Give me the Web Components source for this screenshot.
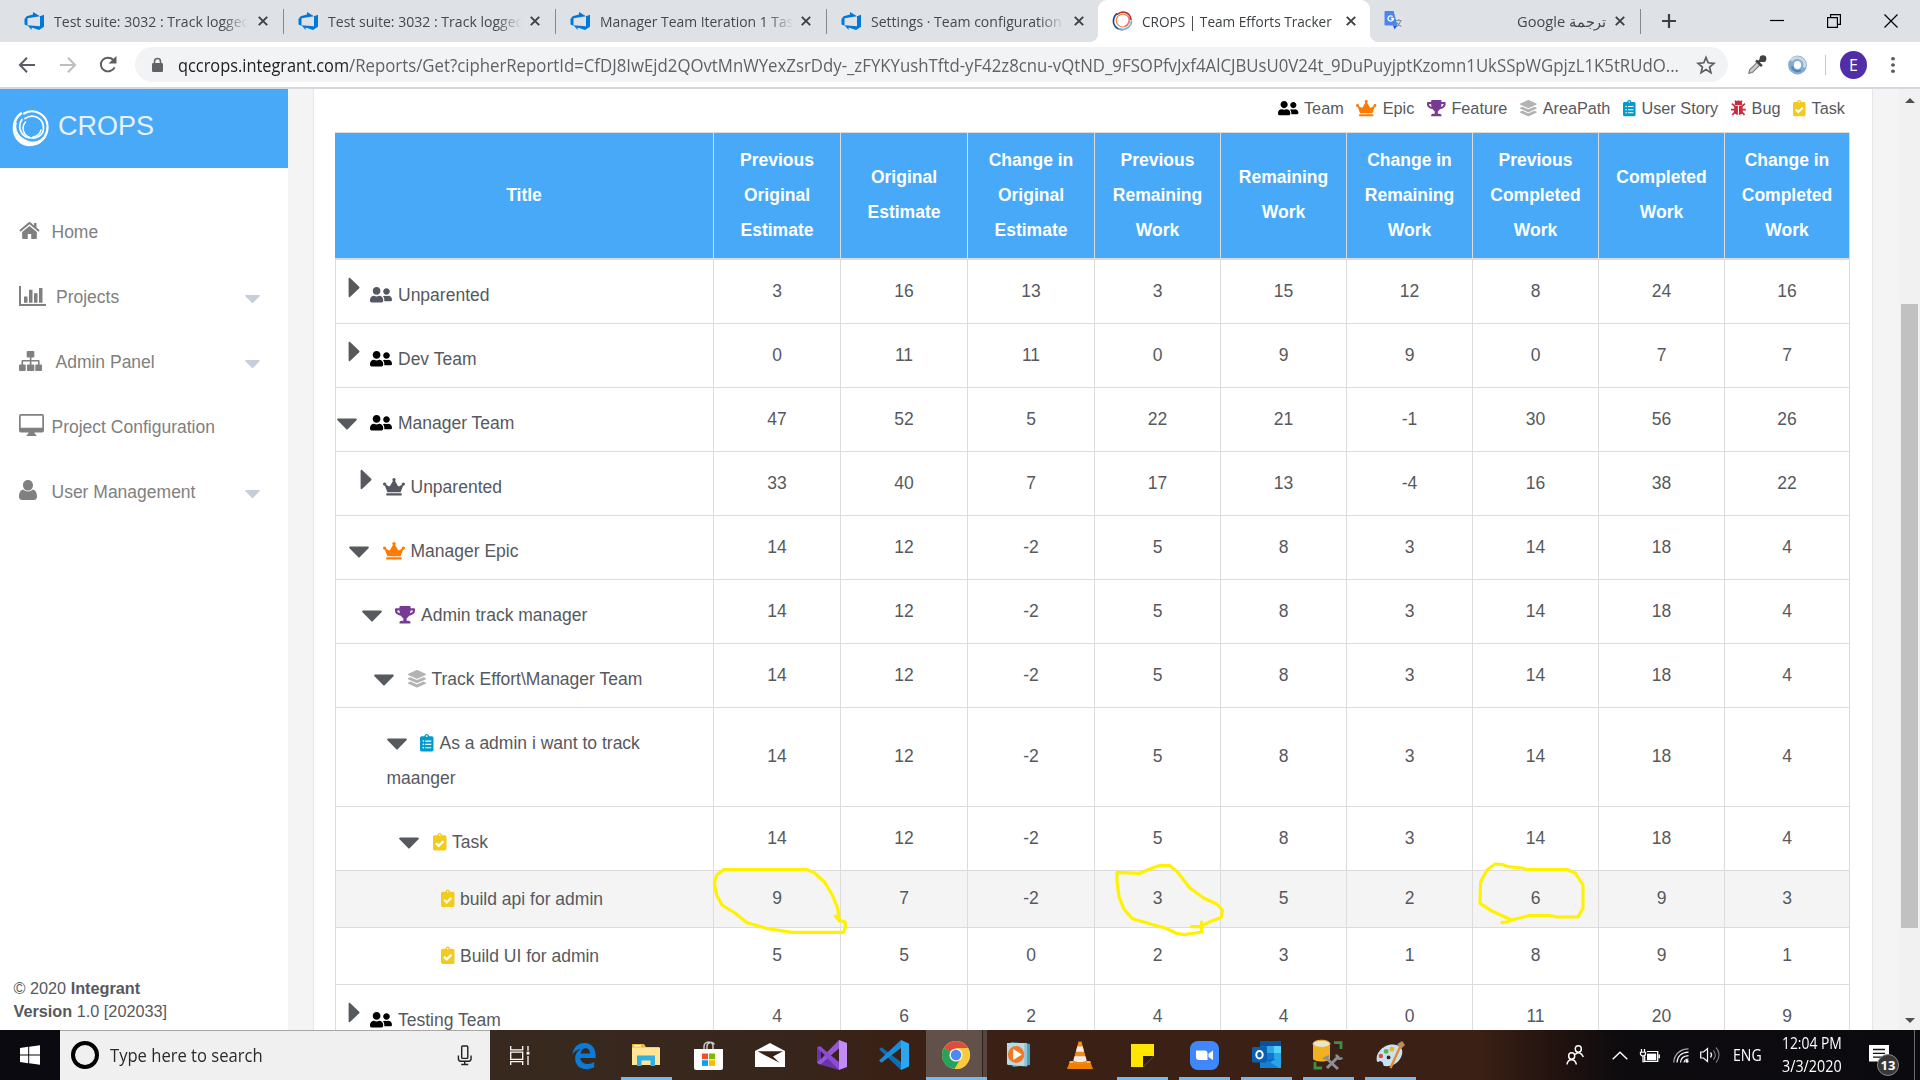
<!DOCTYPE html>
<html lang="en">
<head>
<meta charset="utf-8">
<title>CROPS | Team Efforts Tracker</title>
<style>
html,body{margin:0;height:100%;overflow:hidden}
body{font-family:"Liberation Sans",Arial,sans-serif;font-size:17.5px;color:#56595e;background:#fff}
</style>
</head>
<body>
<desktop-screen></desktop-screen>
<script>
const AZ='<path fill="#0078d7" d="M20 4v12.6L15 20l-7.400-2.600v2.600L3.500 15 16 16V5.500zM16 5.600 9 1v2.700L2.600 5.600.500 8.300v6l3 1.300V7.600z"/>';
const OC='<path d="M192 256c61.9 0 112-50.100 112-112S253.900 32 192 32 80 82.100 80 144s50.100 112 112 112zm76.800 32h-8.300c-20.800 10-43.900 16-68.500 16s-47.600-6-68.500-16h-8.300C51.600 288 0 339.600 0 403.200V432c0 26.500 21.500 48 48 48h288c26.500 0 48-21.500 48-48v-28.800c0-63.600-51.600-115.200-115.200-115.200zM480 256c53 0 96-43 96-96s-43-96-96-96-96 43-96 96 43 96 96 96zm48 32h-3.800c-13.900 4.800-28.600 8-44.200 8s-30.300-3.200-44.200-8H432c-20.400 0-39.200 5.900-55.700 15.400 24.400 26.300 39.700 61.200 39.700 99.800v38.400c0 2.200-.5 4.300-.6 6.400H592c26.500 0 48-21.500 48-48 0-61.900-50.100-112-112-112z"/>';
const ICONS={
azure:['0 0 21 21',AZ],
crops:['0 0 21 21','<g fill="none" stroke-linecap="round"><path d="M10 19.500C3 19 .8 13 1.500 9c.3-2.500 1.500-4.500 3-6" stroke="#1f4a80" stroke-width="1.700"/><path d="M7 19c7 2 12-3 12.500-8" stroke="#7fb2e0" stroke-width="1.800"/><path d="M5.500 3.500C10-1 18 1 19 9" stroke="#b3272c" stroke-width="1.500"/><ellipse cx="10.800" cy="10" rx="6.500" ry="6.800" stroke="#ef8540" stroke-width="1.300"/><path d="M17 6c1 4 0 8-4 10" stroke="#e6737c" stroke-width="1.300"/></g>'],
gtrans:['0 0 20 20','<path fill="#e1e4e8" d="M8 5h10.500v13.500H11z"/><path stroke="#8b97a5" stroke-width="1.200" fill="none" d="M11 9.500h6M14 8v1.500M16 9.500c-.5 3-2 4.500-4 6M12.500 11.500c1 2 2 3 4 4"/><path fill="#4a86ee" d="M1.500 0h7.700l3.600 14.500H1.500a1 1 0 0 1-1-1V1a1 1 0 0 1 1-1z"/><path fill="#3358c4" d="m8.500 14.500h4.300L10 18.500z"/><path fill="none" stroke="#fff" stroke-width="1.300" d="M8.200 5.600A2.600 2.600 0 1 0 9 7.500H6.500"/>'],
x:['0 0 10 10','<path d="m.8.8 8.400 8.400M9.200.8.8 9.200" stroke="#3c4043" stroke-width="1.900" fill="none"/>'],
plus:['0 0 16 16','<path d="M8 1v14M1 8h14" stroke="#3c4043" stroke-width="2.200"/>'],
winmin:['0 0 14 14','<path d="M0 6.500h14" stroke="#000" stroke-width="1.200"/>'],
winmax:['0 0 14 14','<path d="M.6 3.600h9.800v9.800H.6zM3.600 3.600v-3h9.800v9.800h-3" fill="none" stroke="#000" stroke-width="1.200"/>'],
winx:['0 0 14 14','<path d="m.5.500 13 13m0-13-13 13" stroke="#000" stroke-width="1.200"/>'],
back:['0 0 16 16','<path d="M8 .8.900 8 8 15.200M1 8h15" fill="none" stroke="#5a5d61" stroke-width="2"/>'],
fwd:['0 0 16 16','<path d="M8 .8 15.100 8 8 15.200M15 8H0" fill="none" stroke="#bcbec1" stroke-width="2"/>'],
reload:['0 0 18 18','<path d="M15.600 12A7.200 7.200 0 1 1 14.200 4" fill="none" stroke="#5a5d61" stroke-width="2"/><path fill="#5a5d61" d="M17.500 0v8h-8z"/>'],
lock:['0 0 11 14','<path fill="#5f6368" d="M1.300 5h8.400A1.300 1.300 0 0 1 11 6.300v6.400A1.300 1.300 0 0 1 9.700 14H1.300A1.300 1.300 0 0 1 0 12.700V6.300A1.300 1.300 0 0 1 1.300 5z"/><path fill="none" stroke="#5f6368" stroke-width="1.500" d="M2.500 6V3.500a3 3 0 0 1 6 0V6"/>'],
star:['0 0 20 20','<path fill="none" stroke="#5a5d61" stroke-width="1.700" stroke-linejoin="miter" d="m10 2.500 2.200 5.300 5.700.5-4.300 3.700 1.300 5.600-4.900-3-4.900 3 1.300-5.600L2.100 8.300l5.700-.5z"/>'],
pick:['0 0 20 20','<path d="m1.800 18.300.8-3.400 8.200-8.200 2.700 2.700-8.200 8.200z" fill="#c9cbce" stroke="#77797c" stroke-width="1.100"/><path d="M9 5.300 14.900 11.200M11 7.500 16.500 2.500" stroke="#3f4144" stroke-width="2.500"/><circle cx="16" cy="3.700" r="3.400" fill="#3f4144"/>'],
swirl:['0 0 21 21','<ellipse cx="10.500" cy="10.500" rx="6.500" ry="7" fill="none" stroke="#86abd1" stroke-width="5.800"/><path d="M4 6a7.500 7.500 0 0 1 8-3c5 1.500 7 6 5 10" fill="none" stroke="#c5d9ea" stroke-width="2.800"/><path d="M5 12c1 5 6 6 9 4" fill="none" stroke="#4f83b8" stroke-width="2"/>'],
dots:['0 0 6 20','<g fill="#5a5d61"><circle cx="3" cy="3" r="2"/><circle cx="3" cy="10" r="2"/><circle cx="3" cy="17" r="2"/></g>'],
logo:['0 0 37 39','<g fill="none" stroke="#fff" stroke-linecap="round"><path d="M8 4.500C-1 11-1 25 6 31.500c6 6 17 6 23.500-1" stroke-width="2.500"/><path d="M3 14c-3 10 4 21 14.500 22 6 .5 12-3 15-8-6 5-14 7-20 3C5 27.500 1.500 21 3 14z" fill="#fff" stroke-width="1"/><path d="M11 4.500C22-1.500 34 6 34.500 17c.3 8-4 14-11 17" stroke-width="2.200"/><path d="M16 29c-8-2-12-11-7-18.500M12 9.500C20 4 31 9 30.500 20c-.5 7-8 10.500-14 8.500" stroke-width="1.700"/><path d="M12.500 13C8 18 10 26 16.500 28.500M28 21c-1 4-4 6.500-8 7" stroke-width="1.500"/></g>'],
home:['0 0 22 18','<path d="M11 4.200 3.300 10.600V17a1 1 0 0 0 1 1h4.900v-5.300h3.600V18h4.900a1 1 0 0 0 1-1v-6.400z"/><path d="m.3 8.800 1.300 1.400L11 2.500l9.400 7.700 1.300-1.400-3.400-2.900V1h-2.600v2.700L11.900.3a1.500 1.500 0 0 0-1.800 0z"/>'],
bars:['0 0 27 21','<path d="M0 0h2v18.800h25V21H0zM5 11h3.500v6.500H5zM10 4h3.500v13.500H10zM15 7.500h3.500v10H15zM20 2h3.500v15.500H20z"/>'],
sitemap:['0 0 24 20','<path d="M9 0h6a1 1 0 0 1 1 1v4.500a1 1 0 0 1-1 1h-2V9h7.500a1 1 0 0 1 1 1v3.500H23a1 1 0 0 1 1 1V19a1 1 0 0 1-1 1h-5a1 1 0 0 1-1-1v-4.500a1 1 0 0 1 1-1h1.800v-3H13v3h2a1 1 0 0 1 1 1V19a1 1 0 0 1-1 1H9.300a1 1 0 0 1-1-1v-4.500a1 1 0 0 1 1-1h2v-3H4.300v3H6a1 1 0 0 1 1 1V19a1 1 0 0 1-1 1H1a1 1 0 0 1-1-1v-4.500a1 1 0 0 1 1-1h1.600V10a1 1 0 0 1 1-1h7.700V6.500H9a1 1 0 0 1-1-1V1a1 1 0 0 1 1-1z"/>'],
desktop:['0 0 26 22','<path fill-rule="evenodd" d="M2 0h22a2 2 0 0 1 2 2v14.500a2 2 0 0 1-2 2h-8l.8 2H18V22H8v-1.500h1.200l.8-2H2a2 2 0 0 1-2-2V2a2 2 0 0 1 2-2zM1.800 1.800v12h22.400v-12z"/>'],
user:['0 0 18 20','<path d="M9 0c3 0 5 2.300 5 5.200S12 10.500 9 10.500 4 8.200 4 5.200 6 0 9 0zM4 9.500c3 2.500 7 2.500 10 0 3 .8 4 4 4 7C18 18.600 16.800 20 14.800 20H3.200C1.200 20 0 18.600 0 16.500c0-3 1-6.200 4-7z"/>'],
team:['0 0 640 512',OC],
crown:['0 0 640 512','<path d="M528 448H112c-8.800 0-16 7.200-16 16v32c0 8.800 7.200 16 16 16h416c8.800 0 16-7.200 16-16v-32c0-8.800-7.200-16-16-16zm64-320c-26.500 0-48 21.500-48 48 0 7.100 1.600 13.700 4.400 19.800L476 239.200c-15.400 9.200-35.300 4-44.200-11.600L350.300 85C361 76.200 368 63 368 48c0-26.500-21.500-48-48-48s-48 21.500-48 48c0 15 7 28.200 17.700 37l-81.500 142.600c-8.900 15.600-28.900 20.800-44.200 11.600l-72.300-43.400c2.700-6 4.400-12.700 4.400-19.800 0-26.500-21.500-48-48-48S0 149.500 0 176s21.500 48 48 48c2.600 0 5.200-.4 7.700-.8L128 416h384l72.300-192.800c2.500.4 5.100.8 7.700.8 26.500 0 48-21.500 48-48s-21.500-48-48-48z"/>'],
trophy:['0 0 576 512','<path d="M552 64H448V24c0-13.300-10.700-24-24-24H152c-13.300 0-24 10.700-24 24v40H24C10.700 64 0 74.700 0 88v56c0 35.700 22.500 72.400 61.900 100.700 31.500 22.700 69.800 37.100 110 41.700C203.300 338.500 240 360 240 360v72h-48c-35.300 0-64 20.700-64 56v12c0 6.600 5.400 12 12 12h296c6.600 0 12-5.400 12-12v-12c0-35.300-28.700-56-64-56h-48v-72s36.700-21.500 68.100-73.600c40.300-4.600 78.600-19 110-41.700 39.300-28.300 61.900-65 61.900-100.700V88c0-13.300-10.700-24-24-24zM99.300 192.800C74.900 175.200 64 155.600 64 144v-16h64.200c1 32.600 5.800 61.200 12.800 86.200-15.100-5.200-29.200-12.400-41.700-21.400zM512 144c0 16.100-17.700 36.100-35.300 48.800-12.500 9-26.700 16.200-41.800 21.400 7-25 11.800-53.600 12.800-86.200H512v16z"/>'],
layers:['0 0 512 512','<path d="M12.410 148.020l232.940 105.670c6.800 3.090 14.490 3.090 21.290 0l232.940-105.670c16.550-7.510 16.550-32.520 0-40.030L266.650 2.310a25.607 25.607 0 0 0-21.290 0L12.410 107.980c-16.550 7.510-16.550 32.530 0 40.040zm487.180 88.280l-58.090-26.330-161.640 73.270c-7.560 3.430-15.590 5.170-23.860 5.170s-16.290-1.740-23.860-5.170L70.510 209.970l-58.100 26.330c-16.550 7.500-16.550 32.500 0 40l232.940 105.590c6.800 3.080 14.490 3.080 21.290 0L499.590 276.300c16.550-7.500 16.550-32.500 0-40zm0 127.800l-57.870-26.230-161.860 73.370c-7.560 3.430-15.590 5.170-23.860 5.170s-16.290-1.740-23.860-5.170L70.290 337.870 12.410 364.100c-16.550 7.500-16.550 32.500 0 40l232.940 105.590c6.800 3.080 14.490 3.080 21.290 0L499.590 404.100c16.550-7.500 16.550-32.500 0-40z"/>'],
story:['0 0 384 512','<path fill-rule="evenodd" d="M336 64h-80c0-35.300-28.700-64-64-64s-64 28.700-64 64H48C21.500 64 0 85.500 0 112v352c0 26.500 21.500 48 48 48h288c26.500 0 48-21.500 48-48V112c0-26.500-21.500-48-48-48zM192 40a24 24 0 1 1 0 48 24 24 0 0 1 0-48zM96 184a24 24 0 1 1 0 48 24 24 0 0 1 0-48zm0 96a24 24 0 1 1 0 48 24 24 0 0 1 0-48zm0 96a24 24 0 1 1 0 48 24 24 0 0 1 0-48zM152 192h168v32H152zm0 96h168v32H152zm0 96h168v32H152z"/>'],
task:['0 0 384 512','<path d="M336 64h-80c0-35.300-28.700-64-64-64s-64 28.700-64 64H48C21.500 64 0 85.500 0 112v352c0 26.500 21.500 48 48 48h288c26.500 0 48-21.500 48-48V112c0-26.500-21.500-48-48-48zM192 40c13.300 0 24 10.700 24 24s-10.700 24-24 24-24-10.700-24-24 10.700-24 24-24zm121.200 231.800l-143 141.800c-4.700 4.700-12.300 4.600-17-.1l-82.600-83.300c-4.700-4.700-4.600-12.300.1-17L99.100 285c4.700-4.700 12.300-4.600 17 .1l46 46.400 106-105.200c4.700-4.700 12.300-4.600 17 .1l28.200 28.400c4.700 4.800 4.600 12.300-.1 17z"/>'],
bug:['0 0 16 17','<path d="M4 4.500a4 4 0 0 1 8 0v.9H4zM3.600 6.200h3.800v10C5 15.800 3.300 14 3.300 11.800zM8.600 6.200h3.800l.3 5.600c0 2.200-1.700 4-4.100 4.400z"/><path fill="none" stroke="currentColor" stroke-width="1.800" d="M1 4l3.300 2.800M15 4l-3.300 2.800M0 10.400h4M16 10.400h-4M1.400 16l3-3M14.600 16l-3-3M5.500 2.500 4.300.7M10.500 2.500 11.700.7"/>'],
cright:['0 0 12 20','<path d="M.6 1.300C.6.300 1.600 0 2.300.700l8.900 8.600a1 1 0 0 1 0 1.400l-8.900 8.600c-.7.700-1.700.4-1.700-.6z"/>'],
cdown:['0 0 20 12','<path d="M1.200.5h17.600c1 0 1.400 1 .7 1.700l-8.600 8.900a1.200 1.200 0 0 1-1.800 0L.500 2.200C-.200 1.500.200.500 1.200.5z"/>'],
win:['0 0 20 24','<path fill="#fff" d="M0 3.500 8.200 2.200V11.500H0zM9.200 2 20 .3v11.200H9.200zM0 12.500h8.200v9.300L0 20.500zM9.200 12.500H20v11.200L9.200 22z"/>'],
mic:['0 0 16 22','<rect x="5" y="1" width="6.500" height="13" rx="1" fill="none" stroke="#222" stroke-width="1.500"/><path d="M1.500 11v3.500a2.500 2.500 0 0 0 2.500 2.500h8.500a2.500 2.500 0 0 0 2.500-2.500V11M8.200 17v4M4.500 20.500h7.500" fill="none" stroke="#222" stroke-width="1.500"/>'],
taskview:['0 0 20 20','<path fill="none" stroke="#fff" stroke-width="1.300" d="M.7 0v4h12V0M.7 6.500h12v7.500H.7zM.7 20v-3.500h12V20M18 0v5M18 10.500V20"/><path fill="#fff" d="M16.600 6h2.800v3h-2.800z"/>'],
edge:['0 0 28 28','<path fill="#0c7bd8" d="M1.500 13C2.500 5.500 7.500 1 14.500 1 22 1 26.500 6.500 26.500 13.500v3H10c.3 4 3.500 6.200 8 6.200 2.800 0 5-.7 7-2v5.500c-2.500 1.200-5.500 1.800-8.500 1.800C9 28 4.500 23.500 4.500 17c0-4.500 2.500-8 6.500-9.800C6.500 7.500 3.500 9.800 1.500 13zM10.500 12h10c0-3.500-1.700-5.500-4.700-5.500-3 0-4.800 2-5.300 5.500z"/>'],
explorer:['0 0 28 24','<path fill="#e9b83c" d="M0 1h12l2 3h13v18H0z"/><path fill="#ffe694" d="M0 4.500h28V22H0z"/><path fill="#fff" d="M2 2h7v1.500H2z"/><path fill="#2fb1e5" d="M5 12.500h18V23h-4.500v-5.500h-9V23H5z"/>'],
store:['0 0 29 29','<path d="M10 9V5.500a4.500 4.500 0 0 1 9 0V9M13 9V5a4 4 0 0 1 7.500-1.500" fill="none" stroke="#c9c7c5" stroke-width="1.500"/><path fill="#fff" d="M0 8h29v19a2 2 0 0 1-2 2H2a2 2 0 0 1-2-2z"/><path fill="#f25022" d="M8 12.500h6v5.700H8z"/><path fill="#7fba00" d="M15 12.500h6v5.700h-6z"/><path fill="#00a4ef" d="M8 19.200h6v5.700H8z"/><path fill="#ffb900" d="M15 19.200h6v5.700h-6z"/>'],
mail:['0 0 30 24','<path fill="#fff" d="M0 8 15 0l15 8v16H0z"/><path fill="#382015" d="M2.500 8.300h25.500l-10 5.200 6.500 6.300z"/>'],
vs:['0 0 30 30','<path fill="#6a35a5" d="M0 7.500 3 6l13 11.500L22 30 2 24.300 0 22.500z"/><path fill="#39231b" d="m4 11 4.500 4.200L4 19.500z"/><path fill="#9557d6" d="M22 0v8.500L4 24l-2 .3-2-1.800z"/><path fill="#8b4ccf" d="m0 7.500 3-1.200L22 22v8z" /><path fill="#39231b" d="m22 9.500-7.500 5.700L22 21zM4 11.500v7.500l3.700-3.700z"/><path fill="#c18cf5" d="M22 0l8 3v24l-8 3z"/>'],
vscode:['0 0 30 30','<path fill="#0b6fb8" d="m0 9.200 2.500-2L22 22v8z"/><path fill="#1b8dd8" d="m0 20.500 2.500 2.300L22 8V0z"/><path fill="#39231b" d="m22 9.500-7.500 5.500L22 20.500z"/><path fill="#2aa6f3" d="M22 0l8 3.500v23L22 30z"/>'],
chrome:['0 0 28 28','<circle cx="14" cy="14" r="14" fill="#fbc93d"/><path fill="#df4b3e" d="M14 14 1.900 7A14 14 0 0 1 26.100 7z"/><path fill="#24a35a" d="M14 14 1.900 7A14 14 0 0 0 12.500 28l6.500-11z"/><path fill="#fbc93d" d="M14 7h12.100A14 14 0 0 1 12.500 28l7-10z"/><circle cx="14" cy="14" r="6.600" fill="#f4f4f4"/><circle cx="14" cy="14" r="5.200" fill="#4a8af4"/>'],
wmp:['0 0 26 26','<path fill="#4b9db5" d="m5 0 20 2v21L7 25z"/><path fill="#8fc4d8" d="M2 1h20v23.500L2 23z"/><path fill="#b9dbe8" d="M1 1h18v23L1 22.500z"/><circle cx="10.500" cy="12.500" r="8.500" fill="#f07a24"/><path fill="#fff" d="m7.500 7 9 5.500-9 5.500z"/>'],
vlc:['0 0 26 28','<path fill="#f08100" d="M3 20h20l3 8H0z"/><path fill="#ffb347" d="M3 20h20l.8 2H2.200z"/><path fill="#f08a1c" d="M11.500.5h3L20 21c-2 3-12 3-14 0z"/><path fill="#eee" d="M10.300 5.500h5.400l1.400 5.300H8.900zM7.600 15.200h10.800l1.200 4.400c-3 2-10 2-13.200 0z"/>'],
sticky:['0 0 23 23','<path fill="#ffe600" d="M0 0h23v12L12 23H0z"/><path fill="#2d2013" d="M12 12h11L12 23z"/>'],
zoomapp:['0 0 29 29','<rect width="29" height="29" rx="8" fill="#4087fc"/><path fill="#fff" d="M6 9.500h8.500a3 3 0 0 1 3 3V19H9a3 3 0 0 1-3-3zM18.500 12.800 23 9.500v9.500l-4.500-3z"/>'],
outlook:['0 0 29 28','<path fill="#0f6cbd" d="M8 0h21v27H8z"/><path fill="#0a5198" d="M8 0h21v5H8z"/><path fill="#30a8e8" d="M15 5h7v7h-7z"/><path fill="#55d3fb" d="M22 5h7v7h-7z"/><path fill="#0f78d0" d="M15 12h7v6h-7z"/><path fill="#2aa5ea" d="M22 12h7v6h-7zM8 27l21-12v12z"/><path fill="#1380d3" d="m8 15 19 12H8z"/><rect y="6" width="15" height="15.500" rx="1.500" fill="#0b5fb0"/><ellipse cx="7.500" cy="13.700" rx="3.200" ry="3.700" fill="none" stroke="#fff" stroke-width="2"/>'],
ssms:['0 0 30 30','<path fill="#f2b21f" d="M0 3.500v15c0 4 17 4 17 0v-15z"/><ellipse cx="8.500" cy="3.800" rx="8.500" ry="3.600" fill="#e9e4d4" stroke="#f2b21f"/><path fill="none" stroke="#3d9144" stroke-width="2.800" d="M21 2.700h7V9M2 22v6h7"/><path stroke="#8a9096" stroke-width="3" fill="none" d="m14 28 12-12M13 18l12 11"/><path fill="none" stroke="#8a9096" stroke-width="2.500" d="M23.500 14.500c0 4 3 5 6 3.500M10 19l6-3"/>'],
paint:['0 0 30 28','<path fill="#c9e2f2" d="M1 20C-1 10 9 2 18 2.500c9 .5 11 7 8 13-4 8-11 10-17 9.500-2 0-1-3-3-4.500C4 19 2 22 1 20z"/><circle cx="5" cy="14.500" r="2.300" fill="#e04848"/><circle cx="10.500" cy="9.800" r="2.500" fill="#52b653"/><circle cx="16.500" cy="7.500" r="2.500" fill="#f2b51f"/><circle cx="13" cy="16" r="2" fill="#36241c"/><path d="M15 27 25 5" stroke="#e88a2a" stroke-width="2.500"/><path fill="#bb8c5c" d="m22 2 5-3 3 4-4 4z"/>'],
people:['0 0 19 20','<g fill="none" stroke="#fff" stroke-width="1.500"><circle cx="13" cy="4" r="3.200"/><path d="M9.500 9.500c3-3 7-2 8.800 2.500"/><circle cx="6" cy="11" r="3.200"/><path d="M1 19.500c1-6.500 8.500-6.500 10 0"/></g>'],
up:['0 0 16 9','<path d="m.7 8.300 7.300-7 7.300 7" fill="none" stroke="#fff" stroke-width="1.400"/>'],
battery:['0 0 20 14','<path fill="#fff" d="M7 5h9.200v7H7z"/><path fill="none" stroke="#fff" stroke-width="1.300" d="M7 2.700h10.700v10.700H4.700V8M19.300 6v4M1.500 0v3M4.500 0v3M.5 3.500h5v1.500a2.500 2.500 0 0 1-5 0zM3 7v6.500h2"/>'],
wifi:['0 0 16 15','<g fill="none" stroke="#fff" stroke-width="1.200"><path d="M.8 14.500C1 6.500 7 1 15.500.8" opacity=".65"/><path d="M4 14.500C4.200 8.500 8.500 4.500 15.500 4.200"/><path d="M7.500 14.500c.2-4 3-6.500 8-6.800"/><path d="M11 14.500c.2-2 1.500-3.300 4.500-3.500"/></g><circle cx="14" cy="13.300" r="1.500" fill="#fff"/>'],
vol:['0 0 20 18','<g fill="none" stroke="#fff" stroke-width="1.200"><path d="M.7 6v6h2.800l4 3.500v-13L3.500 6z"/><path d="M10.500 6.500c1.300 1.500 1.300 3.500 0 5"/><path d="M13.300 4.300c2.700 2.700 2.700 6.700 0 9.400M16 1.500c4 4.300 4 10.700 0 15" opacity=".45"/></g>'],
note:['0 0 20 21','<path fill="#fff" d="M0 0h20v16.500h-7V21l-4.500-4.500H0z"/><path stroke="#111" stroke-width="1.300" d="M4 4.500h12M4 8.300h12M4 12.100h12"/>']
};
function define(name,html,setup){
  customElements.define(name,class extends HTMLElement{
    constructor(){super();this.attachShadow({mode:'open'})}
    connectedCallback(){
      if(this.ready)return;this.ready=true;
      this.shadowRoot.innerHTML=typeof html==='function'?html(this):html;
      if(setup)setup(this,this.shadowRoot);
    }
  });
}
const at=(e,n,d='')=>e.getAttribute(n)??d;

define('ui-icon',e=>{const i=ICONS[at(e,'name')];
return `<style>:host{display:block;flex:none;width:${at(e,'w')}px;height:${at(e,'h')}px}svg{display:block;width:100%;height:100%;overflow:visible}</style><svg viewBox="${i[0]}" preserveAspectRatio="none" fill="currentColor">${i[1]}</svg>`});

/* Condenses its text horizontally to a given width. */
define('fit-text',e=>`<style>:host{display:block;flex:none;width:${at(e,'w')}px;white-space:nowrap}span{display:inline-block;transform-origin:0 50%;white-space:pre}</style><span><slot></slot></span>`,
(e,r)=>{const s=r.querySelector('span');s.style.transform=`scaleX(${+at(e,'w')/s.offsetWidth})`});

define('browser-tab',e=>`<style>
:host{display:flex;box-sizing:border-box;align-items:center;flex:none;height:42px;width:${at(e,'width')}px;padding-left:${at(e,'pad','14')}px;position:relative;font:15px "Open Sans","Noto Sans",sans-serif;color:#45494d}
:host([active]){background:#fff;border-radius:9px 9px 0 0;color:#3c4043}
:host([active])::before,:host([active])::after{content:"";position:absolute;bottom:0;width:9px;height:9px}
:host([active])::before{left:-9px;background:radial-gradient(circle at 0 0,transparent 9px,#fff 9.5px)}
:host([active])::after{right:-9px;background:radial-gradient(circle at 9px 0,transparent 9px,#fff 9.5px)}
.t{width:${at(e,'clip')}px;margin-left:9px;overflow:hidden;line-height:24px;display:flex;transform:translateY(-.5px)}
.fade{-webkit-mask-image:linear-gradient(90deg,#000 calc(100% - 26px),transparent)}
.rtl{justify-content:flex-end}
.x{margin-left:auto;margin-right:14.500px}
.s{width:1.500px;height:25px;background:#85888c;flex:none}
</style><ui-icon name="${at(e,'icon','azure')}" w="21" h="20"></ui-icon>
<div class="t ${e.hasAttribute('fade')?'fade':''} ${e.hasAttribute('rtl')?'rtl':''}"><fit-text w="${at(e,'fit')}"><slot></slot></fit-text></div>
<ui-icon class="x" name="x" w="10" h="10"></ui-icon>${e.hasAttribute('sep')?'<div class="s"></div>':''}`);

define('tab-strip',`<style>:host{display:flex;height:42px;background:#dee1e6;align-items:center}
.plus{margin-left:20px}.ctl{display:flex;margin-left:auto;gap:43px;padding-right:22px;height:37px;align-items:center}
</style>
<browser-tab width="284" pad="24" clip="194" fit="196" fade sep>Test suite: 3032 : Track logged</browser-tab>
<browser-tab width="272" clip="194" fit="196" fade sep>Test suite: 3032 : Track logged</browser-tab>
<browser-tab width="271" clip="194" fit="201" fade sep>Manager Team Iteration 1 Task</browser-tab>
<browser-tab width="271" clip="194" fit="191" fade>Settings · Team configuration</browser-tab>
<browser-tab width="272" icon="crops" clip="192" fit="190" active>CROPS | Team Efforts Tracker</browser-tab>
<browser-tab width="271" icon="gtrans" clip="192" fit="89" rtl sep><bdi dir="rtl">ترجمة Google</bdi></browser-tab>
<ui-icon class="plus" name="plus" w="16" h="16"></ui-icon>
<div class="ctl"><ui-icon name="winmin" w="14" h="14"></ui-icon><ui-icon name="winmax" w="14" h="14"></ui-icon><ui-icon name="winx" w="14" h="14"></ui-icon></div>`);

define('address-bar',`<style>:host{display:flex;box-sizing:border-box;height:47px;align-items:center;background:#fff;border-bottom:2px solid #d6d8df;padding-left:19px;font:17.500px "Open Sans","Noto Sans",sans-serif}
.pill{display:flex;align-items:center;box-sizing:border-box;margin-left:18px;width:1593px;height:35px;border-radius:18px;background:#f1f3f4;padding:0 12px 0 17px}
.u{display:flex;margin-left:15px;flex:1;color:#5f6368;transform:translateY(-.5px)}.d{color:#202124}
.sep{width:1px;height:20px;background:#c5c9ce;margin:0 14px 0 17px}
.av{width:27px;height:28px;border-radius:50%;background:#512da8;color:#fff;font-size:16px;line-height:28px;text-align:center;margin-right:23px}
</style>
<ui-icon name="back" w="16" h="16"></ui-icon><ui-icon name="fwd" w="16" h="16" style="margin-left:25px"></ui-icon><ui-icon name="reload" w="18" h="17" style="margin-left:23px"></ui-icon>
<div class="pill"><ui-icon name="lock" w="11" h="14"></ui-icon>
<div class="u"><fit-text class="d" w="171">qccrops.integrant.com</fit-text><fit-text w="1330">/Reports/Get?cipherReportId=CfDJ8IwEjd2QOvtMnWYexZsrDdy-_zFYKYushTftd-yF42z8cnu-vQtND_9FSOPfvJxf4AlCJBUsU0V24t_9DuPuyjptKzomn1UkSSpWGpjzL1K5tRUdO...</fit-text></div>
<ui-icon name="star" w="20" h="20"></ui-icon></div>
<ui-icon name="pick" w="20" h="20" style="margin-left:19px"></ui-icon><ui-icon name="swirl" w="21" h="20" style="margin-left:20px"></ui-icon>
<div class="sep"></div><div class="av">E</div><ui-icon name="dots" w="6" h="18"></ui-icon>`);

define('nav-item',e=>`<style>:host{display:flex;height:64.800px;align-items:center;padding-left:19px;color:#808080}
.l{width:${at(e,'lead','32.500')}px;flex:none}.l ui-icon{transform:translateY(-2px)}.c{margin-left:auto;margin-right:28px;color:#c4cfdb;transform:translateY(1.500px)}
</style><div class="l"><ui-icon name="${at(e,'icon')}" w="${at(e,'w')}" h="${at(e,'h')}"></ui-icon></div><slot></slot>${e.hasAttribute('more')?'<ui-icon class="c" name="cdown" w="15" h="9"></ui-icon>':''}`);

define('side-bar',`<style>:host{display:flex;flex-direction:column;width:288px;flex:none;background:#fff;box-sizing:border-box}
header{display:flex;height:79px;box-sizing:border-box;background:#48a9f8;align-items:center;padding-left:13px;gap:8px;color:#e9f1f6;font-size:27px}
header span{transform:translateY(-2px)}nav{padding-top:32.600px}
footer{margin-top:auto;padding:0 0 7px 13.500px;font-size:16.250px;line-height:23px}</style>
<header><ui-icon name="logo" w="37" h="39"></ui-icon><span>CROPS</span></header>
<nav><nav-item icon="home" w="21" h="17">Home</nav-item><nav-item icon="bars" w="27" h="20" lead="37" more>Projects</nav-item><nav-item icon="sitemap" w="23" h="20" lead="36.500" more>Admin Panel</nav-item><nav-item icon="desktop" w="25" h="22">Project Configuration</nav-item><nav-item icon="user" w="18" h="20" more>User Management</nav-item></nav>
<footer>© 2020 <b>Integrant</b><br><b>Version</b> 1.0 [202033]</footer>`);

const KIND={team:['team','#000',22,17.5],teamgrey:['team','#545862',22,17.5],epic:['crown','#ff7b00',22,17.5],epicgrey:['crown','#545862',22,17.5],feature:['trophy','#773b93',20,17.5],area:['layers','#b3b3b3',18,17.5],story:['story','#009ccc',13.5,17.5],bug:['bug','#cc293d',16,17],task:['task','#f2cb1d',13.5,17.5]};
const kindIcon=(k,s=1)=>{const i=KIND[k];return `<ui-icon name="${i[0]}" w="${i[2]*s}" h="${i[3]*s}" style="color:${i[1]}"></ui-icon>`};

define('legend-item',e=>`<style>:host{display:flex;align-items:center;gap:6px;font-size:16.250px}</style>${kindIcon(at(e,'kind'),.93)}<span><slot></slot></span>`);

const COLS='379px 127px 127px 127px repeat(5,126px) 125px';
define('effort-row',e=>{const d=+at(e,'depth','0'),st=at(e,'state'),leaf=st==='leaf',odd=+at(e,'height','64')%2;
const caret=leaf?'':st==='open'?'<ui-icon class="dn" name="cdown" w="20" h="12"></ui-icon>':'<ui-icon class="rt" name="cright" w="12" h="20"></ui-icon>';
return `<style>:host{display:grid;grid-template-columns:${COLS};height:${at(e,'height','64')}px;box-sizing:border-box;border-bottom:1px solid #dcdcdc;line-height:35px}
:host([hot]){background:#f4f4f4}
div.c{display:flex;align-items:center;justify-content:center;border-right:1px solid #dcdcdc;min-width:0;box-sizing:border-box;padding-bottom:${odd?1:0}px}
div.t{border-left:1px solid #dcdcdc;justify-content:flex-start;padding-left:${leaf?104.500:.500+12.500*d}px;padding-bottom:0}
.in{display:grid;grid-template-columns:${leaf?'':'33.500px '}auto auto;column-gap:0;align-items:center;transform:translateY(${leaf?-.5:4}px)}
.k{padding-right:6px}.k ui-icon{transform:translateY(${leaf?0:-1}px)}.dn{transform:translateY(0)}.rt{margin-left:11px;transform:translateY(-8.500px)}.w{grid-column:1/-1}
</style><div class="c t"><div class="in">${caret}<span class="k">${kindIcon(at(e,'kind'))}</span><span><slot></slot></span>${e.hasAttribute('wrap')?`<span class="w">${at(e,'wrap')}</span>`:''}</div></div>`+at(e,'v').split(' ').map(n=>`<div class="c">${n}</div>`).join('')});

define('effort-head',`<style>:host{display:grid;grid-template-columns:${COLS};height:128px;box-sizing:border-box;border-top:1px solid #dcdcdc;border-bottom:2px solid #dcdcdc;background:#48a9f8;color:#fff;font-weight:bold;line-height:35px;text-align:center}
div{display:flex;align-items:center;justify-content:center;border-right:1px solid #dcdcdc;box-sizing:border-box;padding-bottom:1px}div:first-child{border-left:1px solid #dcdcdc}</style>`+
['Title','Previous<br>Original<br>Estimate','Original<br>Estimate','Change in<br>Original<br>Estimate','Previous<br>Remaining<br>Work','Remaining<br>Work','Change in<br>Remaining<br>Work','Previous<br>Completed<br>Work','Completed<br>Work','Change in<br>Completed<br>Work'].map(t=>`<div><span>${t}</span></div>`).join(''));

define('report-page',`<style>:host{display:flex;flex-direction:column;box-sizing:border-box;margin-left:25px;width:1560px;flex:none;background:#fff;border:solid #e7e7e7;border-width:0 1px;padding:0 22px 0 21px;overflow:hidden}
.lg{display:flex;justify-content:flex-end;gap:12.500px;height:43px;align-items:center;padding:0 5px 5px 0;box-sizing:border-box;flex:none}
effort-head,effort-row{flex:none}</style>
<div class="lg"><legend-item kind="team">Team</legend-item><legend-item kind="epic">Epic</legend-item><legend-item kind="feature">Feature</legend-item><legend-item kind="area">AreaPath</legend-item><legend-item kind="story">User Story</legend-item><legend-item kind="bug">Bug</legend-item><legend-item kind="task">Task</legend-item></div>
<effort-head></effort-head>
<effort-row kind="teamgrey" v="3 16 13 3 15 12 8 24 16">Unparented</effort-row>
<effort-row kind="team" v="0 11 11 0 9 9 0 7 7">Dev Team</effort-row>
<effort-row kind="team" state="open" v="47 52 5 22 21 -1 30 56 26">Manager Team</effort-row>
<effort-row kind="epicgrey" depth="1" v="33 40 7 17 13 -4 16 38 22">Unparented</effort-row>
<effort-row kind="epic" depth="1" state="open" v="14 12 -2 5 8 3 14 18 4">Manager Epic</effort-row>
<effort-row kind="feature" depth="2" state="open" v="14 12 -2 5 8 3 14 18 4">Admin track manager</effort-row>
<effort-row kind="area" depth="3" state="open" v="14 12 -2 5 8 3 14 18 4">Track Effort\\Manager Team</effort-row>
<effort-row kind="story" depth="4" state="open" height="99" wrap="maanger" v="14 12 -2 5 8 3 14 18 4">As a admin i want to track</effort-row>
<effort-row kind="task" depth="5" state="open" v="14 12 -2 5 8 3 14 18 4">Task</effort-row>
<effort-row kind="task" state="leaf" height="57" hot v="9 7 -2 3 5 2 6 9 3">build api for admin</effort-row>
<effort-row kind="task" state="leaf" height="57" v="5 5 0 2 3 1 8 9 1">Build UI for admin</effort-row>
<effort-row kind="team" v="4 6 2 4 4 0 11 20 9">Testing Team</effort-row>`);

define('scroll-bar',`<style>:host{display:flex;flex-direction:column;align-items:center;width:21px;background:#f1f1f1;margin-left:auto;flex:none}
i{border:5px solid transparent;width:0;height:0}.u{border-bottom-color:#505050;border-top:0;margin-top:9px}.d{border-top-color:#505050;border-bottom:0;margin-top:auto;margin-bottom:7px}
div{width:17px;height:624px;background:#c1c1c1;margin-top:201px}</style><i class="u"></i><div></div><i class="d"></i>`);

define('pen-marks',`<style>:host{position:absolute;inset:0;pointer-events:none}svg{display:block}</style>
<svg width="1920" height="1080" fill="none" stroke="#fff200" stroke-width="3.200" stroke-linecap="round" stroke-linejoin="round">
<path d="M835.500 916 839.600 921 837.600 908 832.400 895 824.500 882 814 872.500 807 869.700H723.600L716.700 875 714.300 883 716.700 895 722 905 735 913 747 922.700 767.700 928.700 792 932.300H843.400L845.500 927 845 922 839 920 835.500 916"/>
<path d="M1191.400 926.700 1200.500 926.300 1211.200 921.300 1221.400 917.300 1222.500 910 1216.600 904 1203.200 897.700 1189.800 888 1177.500 872 1170 865.700 1160.300 865.300 1152.300 868 1140 873.300 1117 872.300 1117 881.700 1119 896.700 1124 909.300 1132.500 918.700 1149.600 923.700 1165.700 928.300 1176.400 933.300 1184.400 934.700 1201.600 932 1201.600 922"/>
<path d="M1502 922.300 1507 922 1511.700 920 1492.400 911.300 1480 903.300 1480.600 882 1487 870 1495 864 1503 864.700 1508.500 866.700 1522 868 1527 869.700 1567.400 869.700 1575.500 873.300 1583 885 1583 908.300 1578 917 1556.700 917 1548.700 915.300 1530 915.300 1511.700 920"/></svg>`);

define('app-tile',e=>`<style>:host{display:flex;width:62px;height:50px;flex:none;align-items:center;justify-content:center;box-sizing:border-box;position:relative}
:host([run])::after{content:"";position:absolute;left:6px;right:5px;bottom:0;height:3px;background:#76b9ed}
:host([on])::after{left:1px;right:0}
:host([on]){background:linear-gradient(90deg,transparent 1px,#62514a 1px 57px,#2f211b 57px 58px,#55453d 58px)}</style><ui-icon name="${at(e,'icon')}" w="${at(e,'w')}" h="${at(e,'h')}"></ui-icon>`);

define('task-bar',`<style>:host{display:flex;height:50px;align-items:center;color:#fff;font-family:"Open Sans","Noto Sans",sans-serif;background:linear-gradient(90deg,#0b0a10 60px,#38291e 490px,#37261c 780px,#3a2015 900px,#3a2015 1480px,#20120f 1560px,#0d0b0e 1620px,#0b0a0e)}
.st{width:60px;display:flex;justify-content:center}
.se{display:flex;box-sizing:border-box;width:430px;height:50px;background:#f0f0f0;border-top:1px solid #aaa6a5;align-items:center;color:#2b2b2b;font-size:18px;padding:0 18px 1px 11px}
.o{width:20px;height:20px;border:4px solid #000;border-radius:50%;margin-right:11px}
.se ui-icon{margin-left:auto}
.tv{width:63px;display:flex;justify-content:center;box-sizing:border-box;padding-right:4px}
.tray{display:flex;align-items:center;margin-left:auto;height:50px;font-size:16px}
.clk{line-height:23px;margin-left:20px;font-size:15.500px;display:flex;flex-direction:column;align-items:center}
.n{position:relative;margin-left:27px;margin-right:25px}
.n b{position:absolute;left:8px;top:9px;width:20px;height:20px;border:1px solid #8a8a8a;border-radius:50%;background:#38383a;font:bold 13px/20px "Open Sans",sans-serif;text-align:center}
.e{width:1px;height:50px;background:#6d6d70;margin-right:5px}
</style>
<div class="st"><ui-icon name="win" w="20" h="20"></ui-icon></div>
<div class="se"><div class="o"></div><fit-text w="153">Type here to search</fit-text><ui-icon name="mic" w="15" h="21"></ui-icon></div>
<div class="tv"><ui-icon name="taskview" w="20" h="19"></ui-icon></div>
<app-tile icon="edge" w="26" h="27"></app-tile><app-tile icon="explorer" w="28" h="24" run></app-tile><app-tile icon="store" w="29" h="29"></app-tile><app-tile icon="mail" w="30" h="24"></app-tile><app-tile icon="vs" w="30" h="30"></app-tile><app-tile icon="vscode" w="30" h="30"></app-tile><app-tile icon="chrome" w="28" h="28" run on></app-tile><app-tile icon="wmp" w="25" h="26"></app-tile><app-tile icon="vlc" w="26" h="28"></app-tile><app-tile icon="sticky" w="23" h="23" run></app-tile><app-tile icon="zoomapp" w="29" h="29" run></app-tile><app-tile icon="outlook" w="29" h="28" run></app-tile><app-tile icon="ssms" w="30" h="30" run></app-tile><app-tile icon="paint" w="29" h="27" run></app-tile>
<div class="tray"><ui-icon name="people" w="18" h="20"></ui-icon><ui-icon name="up" w="16" h="9" style="margin-left:28px"></ui-icon><ui-icon name="battery" w="20" h="13" style="margin-left:12px"></ui-icon><ui-icon name="wifi" w="16" h="15" style="margin-left:13px"></ui-icon><ui-icon name="vol" w="20" h="18" style="margin-left:11px"></ui-icon><fit-text w="29" style="margin-left:13px">ENG</fit-text>
<div class="clk"><fit-text w="60">12:04 PM</fit-text><fit-text w="60">3/3/2020</fit-text></div>
<div class="n"><ui-icon name="note" w="20" h="21"></ui-icon><b>13</b></div><div class="e"></div></div>`);

define('desktop-screen',`<style>:host{display:flex;flex-direction:column;width:1920px;height:1080px;overflow:hidden;position:relative}
main{display:flex;height:941px;background:#f4f4f4;overflow:hidden}tab-strip,address-bar,task-bar{flex:none}</style>
<tab-strip></tab-strip><address-bar></address-bar>
<main><side-bar></side-bar><report-page></report-page><scroll-bar></scroll-bar></main>
<task-bar></task-bar><pen-marks></pen-marks>`);
</script>
</body>
</html>
